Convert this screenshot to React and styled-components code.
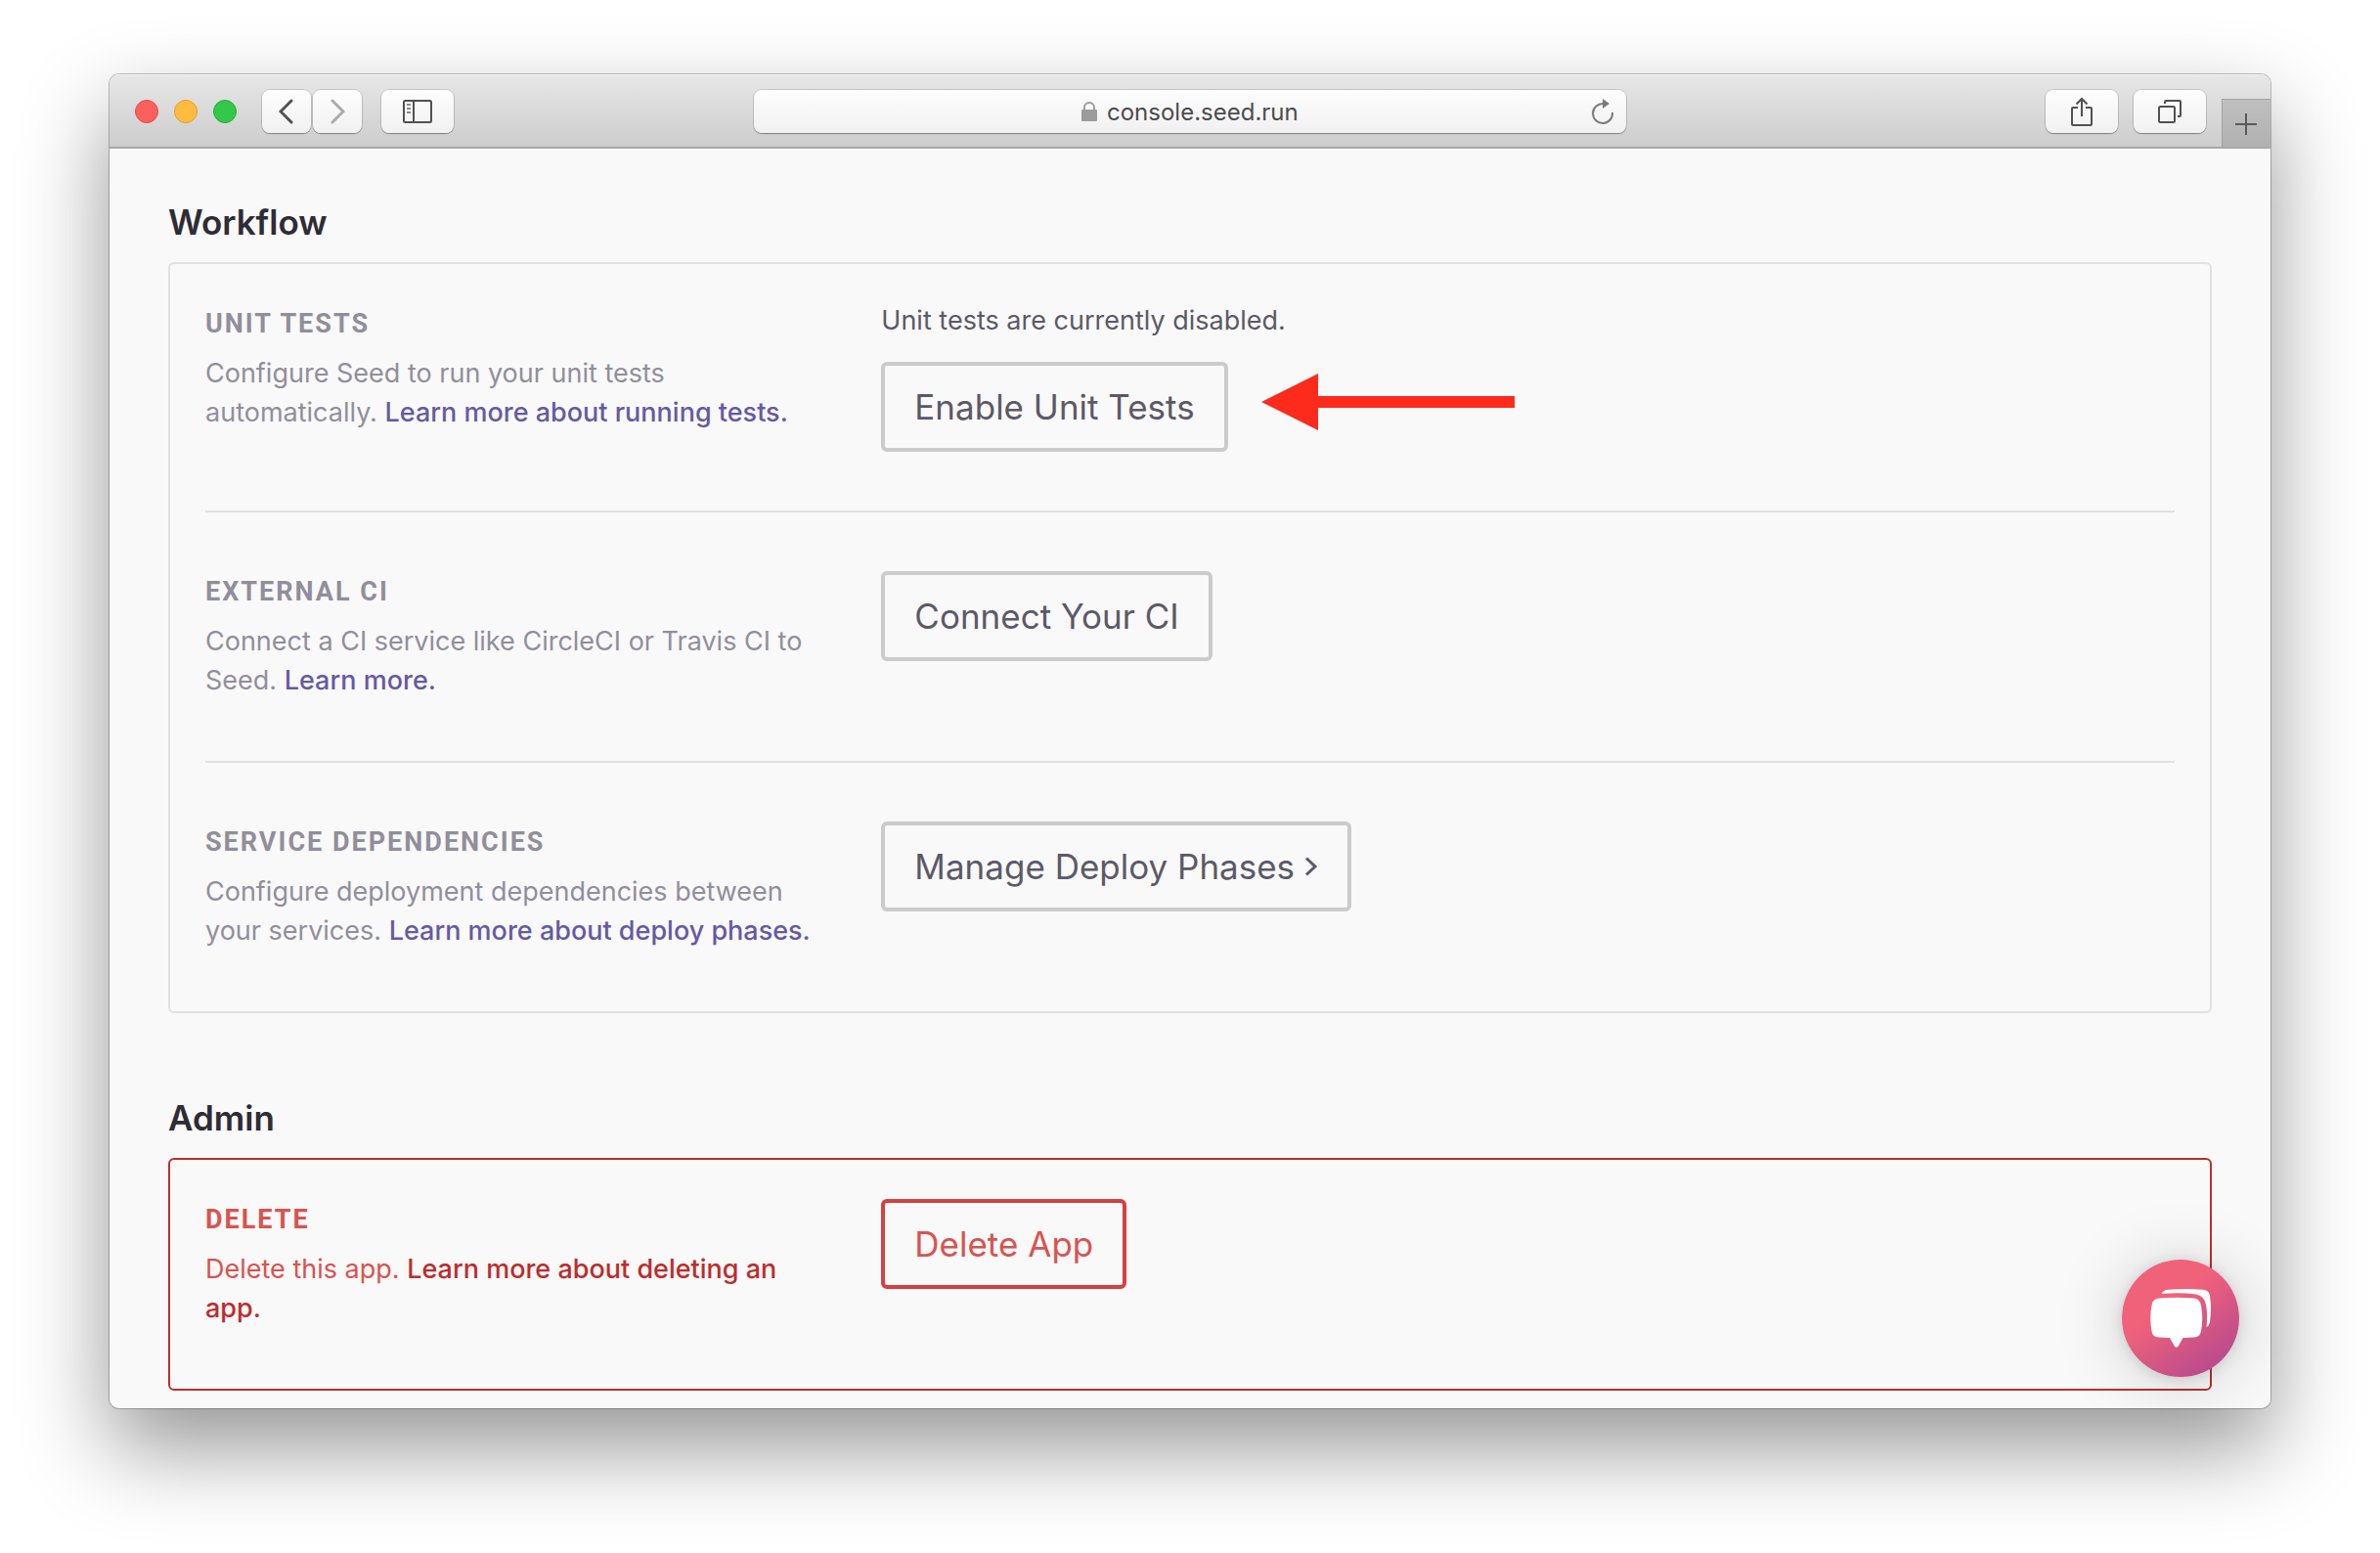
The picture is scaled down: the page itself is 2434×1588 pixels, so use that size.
import React from "react";
import styled, { createGlobalStyle, css } from "styled-components";

const Global = createGlobalStyle`
  *, *::before, *::after { box-sizing: border-box; }
  body {
    margin: 0;
    background: #fff;
    font-family: Inter, "Liberation Sans", sans-serif;
  }
  h2, h3, p { margin: 0; }
  button, input { font: inherit; color: inherit; }
`;

const tones = {
  normal: { frame: "#e1e1e1", label: "#918e9b", text: "#918e9b", link: "#6759a3", button: "#5c5967", edge: "#cbcbcb" },
  danger: { frame: "#bd2f2f", label: "#d95350", text: "#d95350", link: "#bd2c2c", button: "#d95350", edge: "#d54040" },
};

const Desktop = styled.div`
  padding: 76px 112px 148px;
`;

const Browser = styled.div`
  position: relative;
  overflow: hidden;
  border-radius: 10px;
  background: #f9f9f9;
`;

const Shadow = styled.div`
  border-radius: 10px;
  box-shadow: 0 0 0 1px rgba(0, 0, 0, 0.24), 0 40px 90px rgba(0, 0, 0, 0.42);
`;

const Toolbar = styled.header`
  display: grid;
  grid-template-columns: 1fr minmax(0, 892px) 1fr;
  align-items: center;
  height: 76px;
  background: linear-gradient(#e7e7e7, #cccccc);
  box-shadow: inset 0 1px #f5f5f5, inset 0 -2px #a8a8a8;
`;

const LeftTools = styled.div`
  display: flex;
  align-items: center;
  gap: 20px;
  padding-left: 26px;
`;

const Lights = styled.div`
  display: flex;
  gap: 16px;
  margin-right: 6px;
`;

const Light = styled.button`
  width: 24px;
  height: 24px;
  padding: 0;
  border: 1px solid ${(p) => p.$edge};
  border-radius: 50%;
  background: ${(p) => p.$fill};
`;

const Pair = styled.div`
  display: flex;
  gap: 2px;
`;

const chrome = css`
  height: 44px;
  border: 0;
  border-radius: 8px;
  background: linear-gradient(#fdfdfd, #f1f1f1);
  box-shadow: 0 0 0 1px rgba(0, 0, 0, 0.12), 0 1px 1px rgba(0, 0, 0, 0.3);
`;

const ToolButton = styled.button`
  ${chrome}
  display: grid;
  place-items: center;
  width: ${(p) => (p.$wide ? 74 : 50)}px;
  padding: 0;
  color: ${(p) => (p.$dim ? "#aaaaaa" : "#515151")};
`;

const Address = styled.form`
  ${chrome}
  display: grid;
  grid-template-columns: 1fr auto 1fr;
  align-items: center;
  padding: 0 12px;
`;

const Site = styled.label`
  grid-column: 2;
  display: flex;
  align-items: center;
  gap: 10px;
  color: #9c9c9c;
`;

const Url = styled.input`
  width: 196px;
  padding: 2px 0 0;
  border: 0;
  outline: 0;
  background: none;
  color: #4c4c4c;
  font-size: 24px;
  line-height: 32px;
`;

const Reload = styled.button`
  justify-self: end;
  display: flex;
  padding: 0;
  border: 0;
  background: none;
  color: #7b7b7b;
`;

const RightTools = styled.div`
  display: flex;
  align-items: center;
  justify-content: flex-end;
  gap: 16px;
  height: 100%;
`;

const NewTab = styled.button`
  align-self: flex-end;
  display: grid;
  place-items: center;
  width: 50px;
  height: 49px;
  margin-bottom: 2px;
  padding: 2px 0 0;
  border: 0;
  background: linear-gradient(#bfbfbf, #b1b1b1);
  box-shadow: inset 1px 1px #a3a3a3;
  color: #5a5a5a;
`;

const Page = styled.main`
  display: grid;
  gap: 84px;
  padding: 52px 60px 18px;
`;

const Heading = styled.h2`
  margin-bottom: 18px;
  color: #2e2c35;
  font-size: 35px;
  font-weight: 600;
  line-height: 46px;
`;

const Panel = styled.div`
  padding: 0 36px;
  border: 2px solid ${(p) => tones[p.$tone].frame};
  border-radius: 6px;
`;

const Row = styled.section`
  display: grid;
  grid-template-columns: 1fr 2fr;
  gap: 30px;
  align-items: start;
  padding: 60px 0;
  &:first-child { padding-top: 40px; }
  & + & { border-top: 2px solid #e1e1e1; }
`;

const Label = styled.h3`
  margin-bottom: 10px;
  color: ${(p) => tones[p.$tone].label};
  font-family: Roboto, "Liberation Sans", sans-serif;
  font-size: 27px;
  font-weight: 700;
  line-height: 42px;
  letter-spacing: 2px;
  text-transform: uppercase;
`;

const Description = styled.p`
  max-width: 640px;
  padding-bottom: 2px;
  color: ${(p) => tones[p.$tone].text};
  font-size: 27px;
  line-height: 40px;
`;

const Link = styled.a`
  color: ${(p) => tones[p.$tone].link};
  font-weight: 500;
  text-decoration: none;
`;

const Status = styled.p`
  margin-bottom: 24px;
  color: #5c5967;
  font-size: 27px;
  line-height: 36px;
`;

const Action = styled.div`
  display: flex;
  align-items: flex-start;
  gap: 34px;
`;

const Button = styled.button`
  display: flex;
  align-items: center;
  gap: 10px;
  height: 92px;
  padding: 0 30px;
  border: 4px solid ${(p) => tones[p.$tone].edge};
  border-radius: 6px;
  background: transparent;
  color: ${(p) => tones[p.$tone].button};
  font-size: 35px;
  line-height: 46px;
`;

const Chat = styled.button`
  position: absolute;
  right: 32px;
  bottom: 32px;
  width: 120px;
  height: 120px;
  padding: 0;
  border: 0;
  border-radius: 50%;
  background: linear-gradient(143deg, #f0627a 0%, #f0627a 38%, #b5498f 90%);
  box-shadow: 0 2px 14px rgba(0, 0, 0, 0.12), 0 4px 70px rgba(0, 0, 0, 0.18);
`;

const Stroke = ({ w, h, width = 2, children }) => (
  <svg width={w} height={h} viewBox={`0 0 ${w} ${h}`} fill="none" stroke="currentColor" strokeWidth={width} aria-hidden="true">
    {children}
  </svg>
);

const workflow = [
  {
    label: "Unit Tests",
    text: "Configure Seed to run your unit tests automatically.",
    link: "Learn more about running tests.",
    status: "Unit tests are currently disabled.",
    action: "Enable Unit Tests",
    pointed: true,
  },
  {
    label: "External CI",
    text: "Connect a CI service like CircleCI or Travis CI to Seed.",
    link: "Learn more.",
    action: "Connect Your CI",
  },
  {
    label: "Service Dependencies",
    text: "Configure deployment dependencies between your services.",
    link: "Learn more about deploy phases.",
    action: "Manage Deploy Phases",
    more: true,
  },
];

const admin = [
  { label: "Delete", text: "Delete this app.", link: "Learn more about deleting an app.", action: "Delete App" },
];

function Settings({ title, items, tone = "normal" }) {
  return (
    <section>
      <Heading>{title}</Heading>
      <Panel $tone={tone}>
        {items.map((item) => (
          <Row key={item.label}>
            <div>
              <Label $tone={tone}>{item.label}</Label>
              <Description $tone={tone}>
                {item.text} <Link href="#" $tone={tone}>{item.link}</Link>
              </Description>
            </div>
            <div>
              {item.status && <Status>{item.status}</Status>}
              <Action>
                <Button type="button" $tone={tone}>
                  {item.action}
                  {item.more && (
                    <Stroke w={14} h={20} width={3}>
                      <path d="M2 1.5 11 10 2 18.5" />
                    </Stroke>
                  )}
                </Button>
                {item.pointed && (
                  <svg width="260" height="82" viewBox="0 0 260 82" fill="#fc2b1c" aria-hidden="true">
                    <path d="M0 41 58 12V35H259V47H58V70Z" />
                  </svg>
                )}
              </Action>
            </div>
          </Row>
        ))}
      </Panel>
    </section>
  );
}

export default function App() {
  return (
    <>
      <Global />
      <Desktop>
        <Shadow>
          <Browser>
            <Toolbar>
              <LeftTools>
                <Lights>
                  <Light aria-label="Close" $fill="#fc605c" $edge="#e24b47" />
                  <Light aria-label="Minimize" $fill="#fdbc40" $edge="#dea034" />
                  <Light aria-label="Zoom" $fill="#34c84a" $edge="#27ab36" />
                </Lights>
                <Pair>
                  <ToolButton aria-label="Back">
                    <Stroke w={16} h={26} width={3}>
                      <path d="M13 2 2 13 13 24" strokeLinecap="round" />
                    </Stroke>
                  </ToolButton>
                  <ToolButton aria-label="Forward" $dim>
                    <Stroke w={16} h={26} width={3}>
                      <path d="M3 2 14 13 3 24" strokeLinecap="round" />
                    </Stroke>
                  </ToolButton>
                </Pair>
                <ToolButton aria-label="Sidebar" $wide>
                  <Stroke w={30} h={24}>
                    <rect x="1" y="1" width="28" height="22" rx="1.5" />
                    <path d="M11 1V23" />
                    <path d="M4 5H8M4 9H8M4 13H8" stroke="#8a8a8a" />
                  </Stroke>
                </ToolButton>
              </LeftTools>
              <Address onSubmit={(e) => e.preventDefault()}>
                <Site>
                  <svg width="16" height="20" viewBox="0 0 16 20" aria-hidden="true">
                    <rect y="8" width="16" height="12" rx="1" fill="currentColor" />
                    <path d="M3 9V6a5 5 0 0 1 10 0V9" fill="none" stroke="currentColor" strokeWidth="2" />
                  </svg>
                  <Url aria-label="Address" defaultValue="console.seed.run" spellCheck={false} />
                </Site>
                <Reload type="button" aria-label="Reload">
                  <Stroke w={24} h={28}>
                    <path d="M12.5 6A10 10 0 1 0 22 15" />
                    <path d="M12 1 19 6 12 11Z" fill="currentColor" stroke="none" />
                  </Stroke>
                </Reload>
              </Address>
              <RightTools>
                <ToolButton aria-label="Share" $wide>
                  <Stroke w={22} h={30}>
                    <path d="M7 11H2Q1 11 1 12V28Q1 29 2 29H20Q21 29 21 28V12Q21 11 20 11H15M11 20V2M5.500 7.500 11 2 16.500 7.500" />
                  </Stroke>
                </ToolButton>
                <ToolButton aria-label="Tabs" $wide>
                  <Stroke w={24} h={24}>
                    <rect x="1" y="7" width="16" height="16" rx="1.5" />
                    <path d="M7 4V2Q7 1 8 1H22Q23 1 23 2V16Q23 17 22 17H20" />
                  </Stroke>
                </ToolButton>
                <NewTab aria-label="New tab">
                  <Stroke w={22} h={22}>
                    <path d="M11 0V22M0 11H22" />
                  </Stroke>
                </NewTab>
              </RightTools>
            </Toolbar>
            <Page>
              <Settings title="Workflow" items={workflow} />
              <Settings title="Admin" items={admin} tone="danger" />
            </Page>
            <Chat type="button" aria-label="Open chat">
              <svg width="120" height="120" viewBox="0 0 120 120" fill="#fff" aria-hidden="true">
                <path d="M38 39.500Q56 38 74 39.500 80 40 81 47 83.500 60 81 73 80 79 74 79.500L62.500 80 58 88Q55.500 91.500 53.500 88L49 80 38 79.500Q31 79 30.500 73 28 60 30.500 47 31 40 38 39.500Z" />
                <path d="M40.500 35Q42.500 31 47 30.800 65 29 83 30.800 89 31 90 37 92 50 90 64 89 68 86.500 69 88 56 86 46 84 37 76 35.500 60 33.500 40.500 35Z" />
              </svg>
            </Chat>
          </Browser>
        </Shadow>
      </Desktop>
    </>
  );
}
